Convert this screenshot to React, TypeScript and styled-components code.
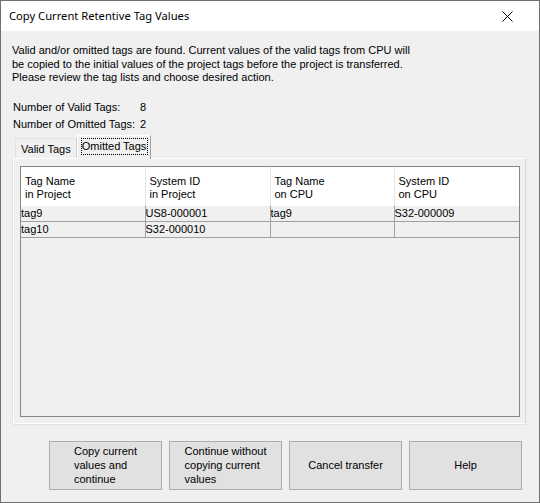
import React from "react";
import styled, { createGlobalStyle } from "styled-components";

const Global = createGlobalStyle`
  html, body { margin: 0; padding: 0; background: #ffffff; }
  body { width: 540px; height: 503px; overflow: hidden; }
`;

const Window = styled.div`
  width: 540px;
  height: 503px;
  box-sizing: border-box;
  border: 1px solid #707070;
  background: #f0f0f0;
  display: flex;
  flex-direction: column;
  font-family: "Liberation Sans", Arial, sans-serif;
  font-size: 11px;
  color: #000;
`;

const TitleBar = styled.div`
  height: 30px;
  flex-shrink: 0;
  background: #ffffff;
  display: flex;
  align-items: center;
  justify-content: space-between;
  padding: 0 26px 0 8px;
  font-family: "Noto Sans", "Open Sans", sans-serif;
  font-size: 11.2px;
`;

const Title = styled.span`
  color: #000;
  margin-top: -1px;
`;

const CloseIcon = styled.svg`
  width: 11px;
  height: 11px;
  display: block;
`;

const Content = styled.div`
  flex: 1;
  display: flex;
  flex-direction: column;
  padding: 13px 0 0 12px;
`;

const Message = styled.p`
  margin: 0 0 0 -1px;
  line-height: 13.6px;
`;

const Stats = styled.div`
  margin-top: 14px;
  display: grid;
  grid-template-columns: 127px auto;
  line-height: 17px;
`;

const TabRow = styled.div`
  margin-top: 2px;
  display: flex;
  align-items: flex-end;
  padding-left: 2px;
  height: 23px;
  position: relative;
  z-index: 1;
`;

const Tab = styled.div<{ $active?: boolean }>`
  box-sizing: border-box;
  height: ${(p) => (p.$active ? 24 : 20)}px;
  margin-bottom: ${(p) => (p.$active ? -1 : 0)}px;
  background: #f0f0f0;
  border-top: 1px solid ${(p) => (p.$active ? "#ffffff" : "#e3e3e3")};
  border-left: 1px solid ${(p) => (p.$active ? "#ffffff" : "#e3e3e3")};
  border-right: 1px solid ${(p) => (p.$active ? "#a0a0a0" : "#d0d0d0")};
  padding: ${(p) => (p.$active ? "2px 2px 0 3px" : "3px 5px 0 5px")};
  line-height: 14px;
  white-space: nowrap;
`;

const TabLabel = styled.span<{ $focus?: boolean }>`
  display: inline-block;
  padding: 1px 2px 2px 1px;
  outline: ${(p) => (p.$focus ? "1px dotted #000" : "none")};
  outline-offset: -1px;
`;

const Panel = styled.div`
  box-sizing: border-box;
  width: 513px;
  height: 266px;
  border-top: 1px solid #ffffff;
  border-left: 1px solid #ffffff;
  border-right: 1px solid #d6d6d6;
  border-bottom: 1px solid #ffffff;
  box-shadow: -1px 0 0 #e3e3e3, 0 1px 0 #e3e3e3;
  padding: 7px 5px 6px 6px;
  display: flex;
`;

const ListBox = styled.div`
  flex: 1;
  border: 1px solid #828790;
  background: #f0f0f0;
  overflow: hidden;
`;

const Grid = styled.table`
  border-collapse: collapse;
  table-layout: fixed;
  width: 498px;
`;

const HeadCell = styled.th<{ $w: number }>`
  width: ${(p) => p.$w}px;
  background: #ffffff;
  border-right: 1px solid #e5e5e5;
  text-align: left;
  font-weight: normal;
  vertical-align: top;
  padding: 8px 0 4px 4px;
  line-height: 13.4px;
  height: 39px;
  box-sizing: border-box;
`;

const Cell = styled.td`
  box-sizing: border-box;
  height: 16px;
  padding: 0;
  border-right: 1px solid #a0a0a0;
  border-bottom: 1px solid #a0a0a0;
  line-height: 15px;
  white-space: nowrap;
  overflow: hidden;
`;

const ButtonRow = styled.div`
  display: flex;
  gap: 7px;
  padding-left: 36px;
  margin-top: 17px;
`;

const Button = styled.button`
  box-sizing: border-box;
  width: 113px;
  height: 49px;
  background: #e1e1e1;
  border: 1px solid #adadad;
  font-family: "Liberation Sans", Arial, sans-serif;
  font-size: 11px;
  color: #000;
  line-height: 14px;
  padding: 0;
  display: flex;
  align-items: center;
  justify-content: center;
`;

const ButtonText = styled.span`
  display: inline-block;
  text-align: left;
`;

const columns = [
  { w: 124, lines: ["Tag Name", "in Project"] },
  { w: 125, lines: ["System ID", "in Project"] },
  { w: 124, lines: ["Tag Name", "on CPU"] },
  { w: 125, lines: ["System ID", "on CPU"] },
];

const rows = [
  ["tag9", "US8-000001", "tag9", "S32-000009"],
  ["tag10", "S32-000010", "", ""],
];

const buttons = [
  ["Copy current", "values and", "continue"],
  ["Continue without", "copying current", "values"],
  ["Cancel transfer"],
  ["Help"],
];

export default function App() {
  return (
    <>
      <Global />
      <Window>
        <TitleBar>
          <Title>Copy Current Retentive Tag Values</Title>
          <CloseIcon viewBox="0 0 11 11">
            <path d="M0.5 0.5 L10.5 10.5 M10.5 0.5 L0.5 10.5" stroke="#000" strokeWidth="1" />
          </CloseIcon>
        </TitleBar>
        <Content>
          <Message>
            Valid and/or omitted tags are found. Current values of the valid tags from CPU will
            <br />
            be copied to the initial values of the project tags before the project is transferred.
            <br />
            Please review the tag lists and choose desired action.
          </Message>
          <Stats>
            <span>Number of Valid Tags:</span>
            <span>8</span>
            <span>Number of Omitted Tags:</span>
            <span>2</span>
          </Stats>
          <TabRow>
            <Tab>Valid Tags</Tab>
            <Tab $active>
              <TabLabel $focus>Omitted Tags</TabLabel>
            </Tab>
          </TabRow>
          <Panel>
            <ListBox>
              <Grid>
                <thead>
                  <tr>
                    {columns.map((c, i) => (
                      <HeadCell key={i} $w={c.w}>
                        {c.lines[0]}
                        <br />
                        {c.lines[1]}
                      </HeadCell>
                    ))}
                  </tr>
                </thead>
                <tbody>
                  {rows.map((r, i) => (
                    <tr key={i}>
                      {r.map((v, j) => (
                        <Cell key={j}>{v}</Cell>
                      ))}
                    </tr>
                  ))}
                </tbody>
              </Grid>
            </ListBox>
          </Panel>
          <ButtonRow>
            {buttons.map((b, i) => (
              <Button key={i}>
                <ButtonText>
                  {b.map((l, k) => (
                    <React.Fragment key={k}>
                      {k > 0 && <br />}
                      {l}
                    </React.Fragment>
                  ))}
                </ButtonText>
              </Button>
            ))}
          </ButtonRow>
        </Content>
      </Window>
    </>
  );
}
